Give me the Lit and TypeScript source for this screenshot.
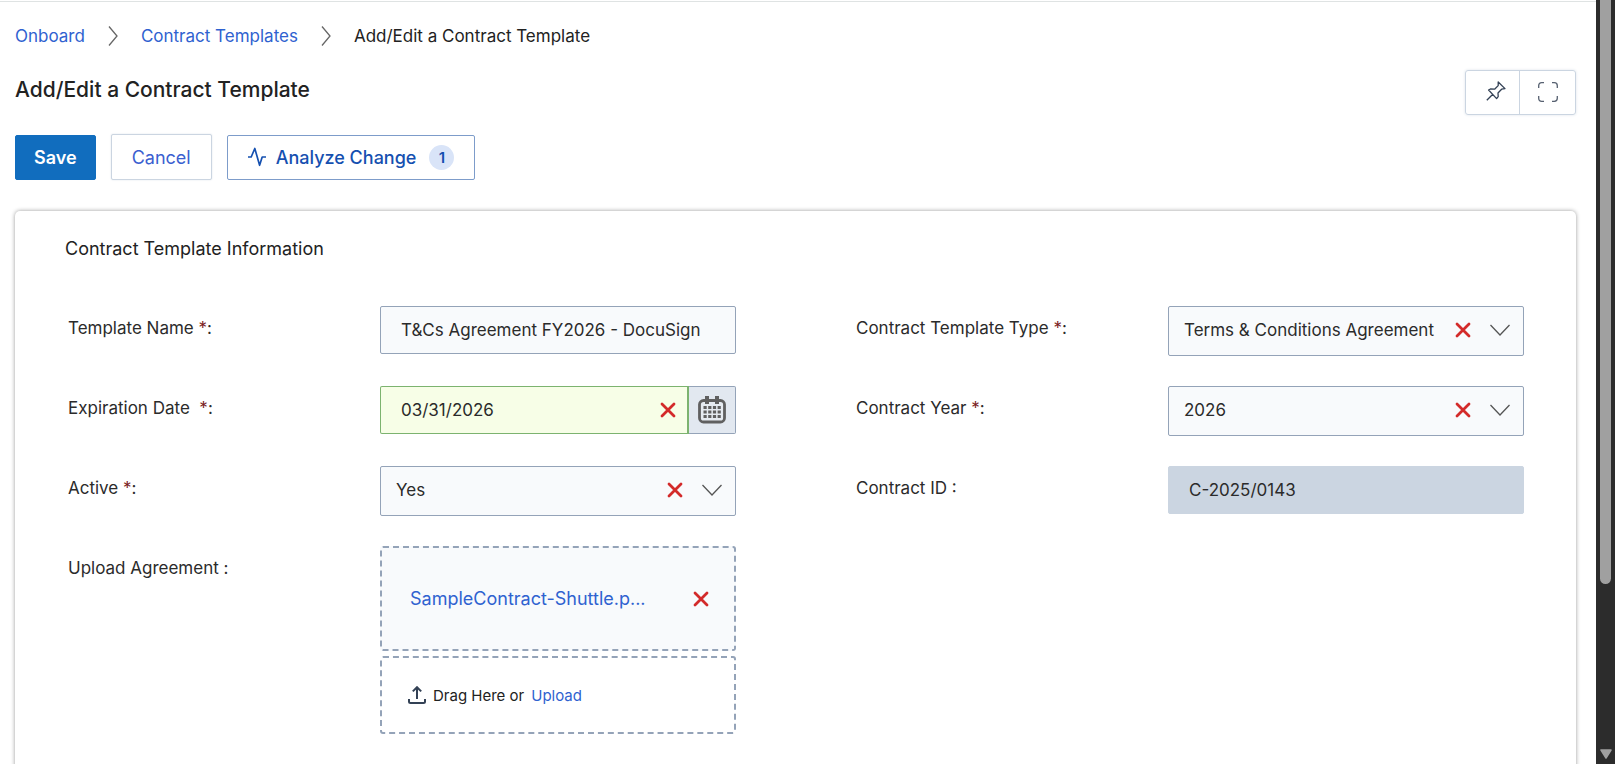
import { LitElement, html, svg, css } from "lit";
import { customElement, property } from "lit/decorators.js";

const crossIcon = html`<svg width="16" height="16" viewBox="0 0 16 16" aria-hidden="true">
  <path d="M2 2 L14 14 M14 2 L2 14" fill="none" stroke="#d32a2a" stroke-width="2.8" stroke-linecap="round" />
</svg>`;

const shared = css`
  * {
    box-sizing: border-box;
  }
  button,
  input,
  select {
    font: inherit;
    color: inherit;
    margin: 0;
  }
  button {
    cursor: pointer;
  }
  svg {
    display: block;
    flex: none;
  }
  .clear {
    display: flex;
    padding: 0;
    border: 0;
    background: none;
  }
`;

@customElement("form-row")
class FormRow extends LitElement {
  @property() label = "";
  @property({ type: Boolean }) required = false;
  @property() kind = "text";
  @property() value = "";
  @property({ type: Boolean }) spaced = false;

  static styles = [
    shared,
    css`
      :host {
        display: grid;
        grid-template-columns: minmax(0, 312fr) minmax(0, 356fr);
        align-items: start;
      }
      .label {
        padding-top: 10px;
        line-height: 24px;
        color: #2b2b2b;
      }
      .star {
        color: #7a1c1c;
      }
      .text {
        display: block;
        width: 100%;
        height: 48px;
        padding: 0 20px;
        border: 1px solid #94a3b8;
        border-radius: 2px;
        background: #f8fafc;
        color: #2b2b2b;
        outline: none;
      }
      .readonly {
        border-color: #cbd5e1;
        background: #cbd5e1;
      }
      .date {
        display: flex;
      }
      .date-box {
        display: flex;
        align-items: center;
        flex: 1;
        min-width: 0;
        height: 48px;
        padding: 0 11px 0 20px;
        border: 1px solid #7cb36f;
        border-right-width: 2px;
        border-radius: 2px 0 0 2px;
        background: #f7fee7;
      }
      .date-input {
        flex: 1;
        min-width: 0;
        border: 0;
        padding: 0;
        background: none;
        color: #2b2b2b;
        outline: none;
      }
      .calendar {
        display: flex;
        align-items: center;
        justify-content: center;
        width: 47px;
        height: 48px;
        padding: 0;
        border: 1px solid #94a3b8;
        border-left: 0;
        border-radius: 0 2px 2px 0;
        background: #e2e8f0;
      }
      .select-wrap {
        position: relative;
      }
      .select {
        display: block;
        width: 100%;
        height: 50px;
        padding: 0 72px 2px 15px;
        border: 1px solid #94a3b8;
        border-radius: 2px;
        background: #f8fafc;
        color: #2b2b2b;
        appearance: none;
        outline: none;
      }
      .marks {
        position: absolute;
        inset: 0 14px 2px auto;
        display: flex;
        align-items: center;
        gap: 19px;
        pointer-events: none;
      }
      .marks .clear {
        pointer-events: auto;
      }
    `,
  ];

  private control() {
    switch (this.kind) {
      case "select":
        return html`<div class="select-wrap">
          <select class="select" id="field"><option>${this.value}</option></select>
          <div class="marks">
            <button class="clear" aria-label="Clear">${crossIcon}</button>
            <svg width="20" height="12" viewBox="0 0 20 12" aria-hidden="true">
              <path d="M0.5 1 L10 11 L19.5 1" fill="none" stroke="#555" stroke-width="1.3" />
            </svg>
          </div>
        </div>`;
      case "date":
        return html`<div class="date">
          <div class="date-box">
            <input class="date-input" id="field" .value=${this.value} />
            <button class="clear" aria-label="Clear">${crossIcon}</button>
          </div>
          <button class="calendar" aria-label="Open calendar">
            <svg width="28" height="28" viewBox="0 0 28 28" aria-hidden="true">
              <rect x="1.5" y="4.5" width="25" height="21.5" rx="4" fill="#e6ebf1" stroke="#606060" stroke-width="2.8" />
              <path d="M7 0h4v8h-4z M17 0h4v8h-4z" fill="#606060" />
              ${[10, 14.5, 19].map((y) =>
                [5.5, 10.2, 14.9, 19.6].map((x) => svg`<rect x=${x} y=${y} width="3.2" height="3" fill="#606060" />`)
              )}
            </svg>
          </button>
        </div>`;
      case "readonly":
        return html`<input class="text readonly" id="field" readonly .value=${this.value} />`;
      case "slot":
        return html`<slot></slot>`;
      default:
        return html`<input class="text" id="field" .value=${this.value} />`;
    }
  }

  render() {
    const tail = this.required
      ? html`${this.spaced ? html`&nbsp; ` : " "}<span class="star">*</span>:`
      : " :";
    return html`<label class="label" for="field">${this.label}${tail}</label>${this.control()}`;
  }
}

@customElement("app-root")
class AppRoot extends LitElement {
  static styles = [
    shared,
    css`
      :host {
        display: flex;
        height: 100vh;
        overflow: hidden;
        background: #fff;
        color: #222;
        font-family: Inter, sans-serif;
        font-size: 17px;
      }
      a {
        color: #2f62d0;
        text-decoration: none;
      }
      .page {
        flex: 1;
        min-width: 0;
        overflow: hidden;
        margin-top: 1px;
        border-top: 1px solid #dfe3e3;
        padding: 0 20px 0 15px;
      }
      .crumbs {
        display: flex;
        align-items: center;
        gap: 23px;
        padding-top: 22px;
        line-height: 24px;
      }
      .head {
        display: flex;
        justify-content: space-between;
        align-items: flex-start;
        padding-top: 22px;
      }
      .title {
        margin: 0;
        padding-top: 5px;
        font-size: 21px;
        line-height: 30px;
        font-weight: 500;
      }
      .tools {
        display: flex;
        border: 1px solid #cbd5e1;
        border-radius: 3px;
        box-shadow: 0 0 3px #dde3ea;
      }
      .tool {
        display: flex;
        align-items: center;
        justify-content: center;
        width: 56px;
        height: 43px;
        padding: 0 0 2px;
        border: 0;
        background: none;
      }
      .tool + .tool {
        border-left: 1px solid #cbd5e1;
      }
      .pin {
        width: 53px;
        padding: 0 0 3px 6px;
      }
      .actions {
        display: flex;
        align-items: center;
        gap: 15px;
        padding-top: 19px;
      }
      .btn {
        display: flex;
        align-items: center;
        height: 45px;
        padding: 0 20px;
        border: 1px solid #cbd5e1;
        border-radius: 2px;
        background: #fff;
        color: #3a60d0;
        font-size: 18px;
        font-weight: 500;
      }
      .save {
        border-color: #116dbe;
        background: #116dbe;
        color: #fff;
        padding: 0 18px;
        font-weight: 600;
      }
      .cancel {
        height: 46px;
        box-shadow: 0 0 2px #dde3ea;
        font-weight: 400;
      }
      .analyze {
        border-color: #7d9cca;
        color: #1550b0;
      }
      .analyze-text {
        margin: 0 13px 0 10px;
      }
      .badge {
        width: 25px;
        height: 25px;
        border-radius: 50%;
        background: #d9e4f8;
        font-size: 15px;
        line-height: 25px;
        font-weight: 600;
        text-align: center;
      }
      .card {
        margin-top: 31px;
        padding: 25px 52px 120px 53px;
        border-radius: 5px;
        box-shadow: 0 0 4px rgba(0, 0, 0, 0.4);
      }
      .section {
        margin: 0 0 44px -3px;
        font-size: 18px;
        line-height: 26px;
        font-weight: 400;
      }
      .form {
        display: grid;
        grid-template-columns: 1fr 1fr;
        column-gap: 120px;
      }
      .column {
        display: grid;
        grid-auto-rows: minmax(80px, auto);
        align-content: start;
      }
      .uploads {
        display: grid;
        gap: 5px;
      }
      .file,
      .drop {
        display: flex;
        align-items: center;
        border: 2px dashed #94a3b8;
        border-radius: 3px;
      }
      .file {
        justify-content: space-between;
        height: 105px;
        padding: 0 25px 0 28px;
        background: #f8fafc;
        font-size: 18px;
      }
      .drop {
        height: 78px;
        padding: 0 26px;
        gap: 7px;
        font-size: 15px;
      }
      .scroll {
        display: flex;
        flex-direction: column;
        align-items: center;
        justify-content: space-between;
        width: 19px;
        background: #2c2c2c;
        padding-bottom: 5px;
      }
      .thumb {
        width: 11px;
        height: 77%;
        border-radius: 0 0 6px 6px;
        background: #a0a0a0;
      }
    `,
  ];

  render() {
    const sep = html`<svg width="10" height="20" viewBox="0 0 10 20" aria-hidden="true">
      <path d="M1 0.5 L9 10 L1 19.5" fill="none" stroke="#666" stroke-width="1.3" />
    </svg>`;
    return html`
      <main class="page">
        <nav class="crumbs">
          <a href="#">Onboard</a>${sep}<a href="#">Contract Templates</a>${sep}<span>Add/Edit a Contract Template</span>
        </nav>
        <header class="head">
          <h1 class="title">Add/Edit a Contract Template</h1>
          <div class="tools">
            <button class="tool pin" aria-label="Pin">
              <svg width="20" height="20" viewBox="0 0 20 20" aria-hidden="true">
                <path
                  d="M12.2 1 L19 7.6 L15.6 8.2 L12 12 L12.2 15.6 L10.6 17.6 L2.6 9 L4.4 8 L8.6 8.2 L12.2 4.6 Z M6.8 13.2 L0.8 19.2"
                  fill="none" stroke="#334155" stroke-width="1.3" stroke-linejoin="round" />
              </svg>
            </button>
            <button class="tool" aria-label="Full screen">
              <svg width="20" height="20" viewBox="0 0 20 20" aria-hidden="true">
                <path
                  d="M0.7 6 V3.7 Q0.7 0.7 3.7 0.7 H6 M14 0.7 H16.3 Q19.3 0.7 19.3 3.7 V6 M19.3 14 V16.3 Q19.3 19.3 16.3 19.3 H14 M6 19.3 H3.7 Q0.7 19.3 0.7 16.3 V14"
                  fill="none" stroke="#566070" stroke-width="1.3" />
              </svg>
            </button>
          </div>
        </header>
        <div class="actions">
          <button class="btn save">Save</button>
          <button class="btn cancel">Cancel</button>
          <button class="btn analyze">
            <svg width="18" height="20" viewBox="0 0 18 20" aria-hidden="true">
              <path d="M0 10 H3.2 L6.8 1.5 L11.6 18.3 L14.2 10 H18" fill="none" stroke="#1550b0" stroke-width="1.7" stroke-linejoin="round" />
            </svg>
            <span class="analyze-text">Analyze Change</span>
            <span class="badge">1</span>
          </button>
        </div>
        <section class="card">
          <h2 class="section">Contract Template Information</h2>
          <div class="form">
            <div class="column">
              <form-row label="Template Name" required value="T&amp;Cs Agreement FY2026 - DocuSign"></form-row>
              <form-row label="Expiration Date" required spaced kind="date" value="03/31/2026"></form-row>
              <form-row label="Active" required kind="select" value="Yes"></form-row>
              <form-row label="Upload Agreement" kind="slot">
                <div class="uploads">
                  <div class="file">
                    <a href="#">SampleContract-Shuttle.p...</a>
                    <button class="clear" aria-label="Remove file">${crossIcon}</button>
                  </div>
                  <div class="drop">
                    <svg width="18" height="18" viewBox="0 0 18 18" aria-hidden="true">
                      <path d="M9 13 V1.4 M4.8 5.4 L9 1.2 L13.2 5.4 M1 13 V15.4 Q1 16.9 2.5 16.9 H15.5 Q17 16.9 17 15.4 V13" fill="none" stroke="#334155" stroke-width="2" />
                    </svg>
                    <span>Drag Here or</span>
                    <a href="#">Upload</a>
                  </div>
                </div>
              </form-row>
            </div>
            <div class="column">
              <form-row label="Contract Template Type" required kind="select" value="Terms &amp; Conditions Agreement"></form-row>
              <form-row label="Contract Year" required kind="select" value="2026"></form-row>
              <form-row label="Contract ID" kind="readonly" value="C-2025/0143"></form-row>
            </div>
          </div>
        </section>
      </main>
      <div class="scroll" aria-hidden="true">
        <div class="thumb"></div>
        <svg width="12" height="10" viewBox="0 0 12 10"><path d="M1 1 H11 L6 9 Z" fill="#a0a0a0" stroke="#a0a0a0" stroke-width="1.5" stroke-linejoin="round" /></svg>
      </div>
    `;
  }
}
